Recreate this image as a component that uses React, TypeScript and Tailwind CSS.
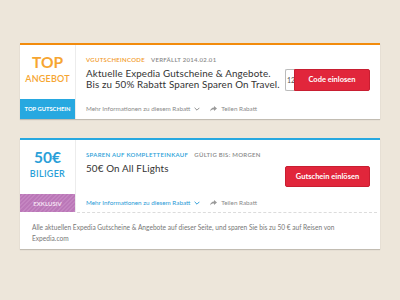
import React from "react";

const ShareIcon = ({ color = "#9a9a9a" }: { color?: string }) => (
  <svg width="7" height="6" viewBox="0 0 14 12" className="mr-[4px]">
    <path d="M8 0 L14 5 L8 10 L8 7 C4 7 2 8 0 11 C0.8 6.5 3.5 3.5 8 3.2 Z" fill={color} />
  </svg>
);

const Chevron = ({ color }: { color: string }) => (
  <svg width="6" height="4" viewBox="0 0 10 6" className="ml-[4px]">
    <path d="M1 1 L5 5 L9 1" stroke={color} strokeWidth="1.6" fill="none" />
  </svg>
);

export default function App() {
  return (
    <div className="min-h-[300px] w-[400px] bg-[#ede6da] pt-[43px] font-['Lato',sans-serif]">
      {/* Card 1 */}
      <div className="mx-[20px] bg-white border-t-2 border-[#f28b0c] shadow-[0_1px_1px_rgba(0,0,0,0.18)]">
        <div className="flex">
          <div className="w-[56px] border-r border-[#ececec] flex flex-col">
            <div className="h-[54px] flex flex-col items-center pt-[9px]">
              <div className="text-[15.5px] leading-[16px] font-bold text-[#f6a531]">TOP</div>
              <div className="text-[9px] leading-[10px] mt-[4px] font-semibold text-[#f6a531] tracking-[0.2px]">ANGEBOT</div>
            </div>
            <div className="h-[20px] bg-[#27a8e0] text-white text-[5.8px] font-bold flex items-center justify-center">
              TOP GUTSCHEIN
            </div>
          </div>
          <div className="flex-1 flex flex-col">
            <div className="h-[54px] flex pl-[10px] pr-[10px]">
              <div className="flex-1 pt-[10px]">
                <div className="flex items-center h-[8px] text-[6px] font-semibold tracking-[0.3px] uppercase">
                  <span className="text-[#f29a2a]">VGUTSCHEINCODE</span>
                  <span className="text-[#888] ml-[6px]">VERFÄLLT 2014.02.01</span>
                </div>
                <div className="mt-[5px] text-[9.8px] leading-[10.7px] text-[#333] tracking-[0.15px]">
                  <div>Aktuelle Expedia Gutscheine &amp; Angebote.</div>
                  <div>Bis zu 50% Rabatt Sparen Sparen On Travel.</div>
                </div>
              </div>
              <div className="pt-[24px] flex">
                <div className="w-[9px] h-[22px] border border-r-0 border-[#bbb] rounded-l-[2px] text-[7px] text-[#555] leading-[20px] overflow-hidden pl-[1px]">12</div>
                <div className="w-[76px] h-[22px] bg-[#e1263b] rounded-r-[2px] border border-[#c81e31] text-white text-[7.5px] font-bold flex items-center justify-center">
                  Code einlosen
                </div>
              </div>
            </div>
            <div className="h-[20px] flex items-center pl-[10px] text-[6.3px] text-[#8a8a8a]">
              <span>Mehr Informationen zu diesem Rabatt</span>
              <Chevron color="#8a8a8a" />
              <span className="ml-[10px] flex items-center">
                <ShareIcon />
                Teilen Rabatt
              </span>
            </div>
          </div>
        </div>
      </div>

      {/* Card 2 */}
      <div className="mx-[20px] mt-[19px] bg-white border-t-2 border-[#27a8e0] shadow-[0_1px_1px_rgba(0,0,0,0.18)]">
        <div className="flex">
          <div className="w-[56px] border-r border-[#ececec] flex flex-col">
            <div className="h-[54px] flex flex-col items-center pt-[9px]">
              <div className="text-[15.5px] leading-[16px] font-bold text-[#2a9fd8]">50€</div>
              <div className="text-[9px] leading-[10px] mt-[4px] font-semibold text-[#2a9fd8] tracking-[0.3px]">BILIGER</div>
            </div>
            <div className="h-[18px] bg-[repeating-linear-gradient(135deg,#bb78b8_0px,#bb78b8_1.5px,#c485c1_1.5px,#c485c1_3px)] text-[#f3e0f1] text-[6px] font-bold flex items-center justify-center">
              EXKLUSIV
            </div>
          </div>
          <div className="flex-1 flex flex-col">
            <div className="h-[54px] flex pl-[10px] pr-[10px]">
              <div className="flex-1 pt-[10px]">
                <div className="flex items-center h-[8px] text-[6px] font-semibold tracking-[0.3px] uppercase">
                  <span className="text-[#2a9fd8]">SPAREN AUF KOMPLETTEINKAUF</span>
                  <span className="text-[#888] ml-[6px]">GÜLTIG BIS: MORGEN</span>
                </div>
                <div className="mt-[5px] text-[9.8px] leading-[10.7px] text-[#333] tracking-[0.15px]">
                  50€ On All FLights
                </div>
              </div>
              <div className="pt-[26px]">
                <div className="w-[85px] h-[21px] bg-[#e1263b] rounded-[2px] border border-[#c81e31] text-white text-[7.5px] font-bold flex items-center justify-center">
                  Gutschein einlösen
                </div>
              </div>
            </div>
            <div className="h-[18px] flex items-center pl-[10px] text-[6.3px] text-[#2a9ad6]">
              <span>Mehr Informationen zu diesem Rabatt</span>
              <Chevron color="#2a9ad6" />
              <span className="ml-[10px] flex items-center text-[#8a8a8a]">
                <ShareIcon />
                Teilen Rabatt
              </span>
            </div>
          </div>
        </div>
        <div className="flex">
          <div className="w-[57px]" />
          <div className="flex-1 mr-[3px] border-t border-dashed border-[#dcdcdc]" />
        </div>
        <div className="px-[12px] pt-[9px] pb-[5px] text-[6.6px] leading-[11px] text-[#777]">
          Alle aktuellen Expedia Gutscheine &amp; Angebote auf dieser Seite, und sparen Sie bis zu 50 € auf Reisen von Expedia.com
        </div>
      </div>
    </div>
  );
}
